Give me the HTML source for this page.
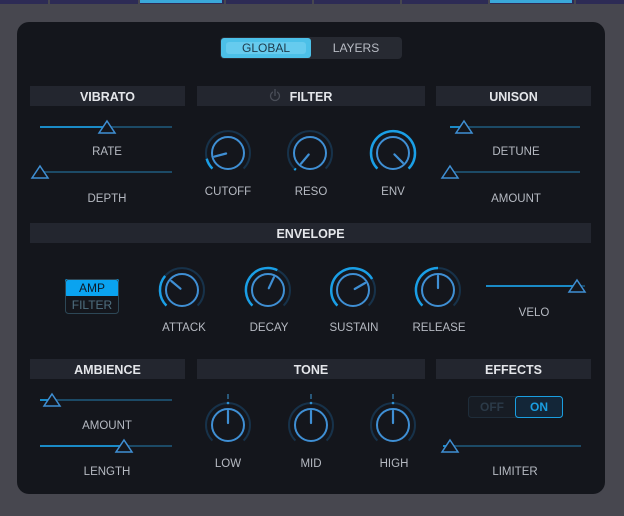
<!DOCTYPE html>
<html><head><meta charset="utf-8"><style>
body{margin:0;width:624px;height:516px;background:#47474f;overflow:hidden;font-family:"Liberation Sans",sans-serif}
</style></head><body>
<svg id="s" width="624" height="516" xmlns="http://www.w3.org/2000/svg" style="position:absolute;left:0;top:0;font-family:'Liberation Sans',sans-serif">
<rect x="0" y="0" width="624" height="4" fill="#2d2b55"/>
<rect x="140" y="0" width="82" height="3" fill="#3aa8da"/>
<rect x="490" y="0" width="82" height="3" fill="#3aa8da"/>
<g fill="#47474f"><rect x="48" y="0" width="2" height="4"/><rect x="138" y="0" width="2" height="4"/><rect x="224" y="0" width="2" height="4"/><rect x="312" y="0" width="2" height="4"/><rect x="400" y="0" width="2" height="4"/><rect x="488" y="0" width="2" height="4"/><rect x="574" y="0" width="2" height="4"/></g>
<rect x="17" y="22" width="588" height="472" rx="12" fill="#14161c"/>
<rect x="220" y="37" width="182" height="22" rx="4" fill="#272a32"/>
<rect x="221" y="38" width="90" height="20" rx="3" fill="#4cc0e8"/>
<rect x="226" y="42" width="80" height="12" rx="3" fill="#7fd6f4" opacity="0.5"/>
<text x="266" y="52" fill="#1e3a4a" font-size="12" text-anchor="middle">GLOBAL</text>
<text x="356" y="52" fill="#b8bcc4" font-size="12" text-anchor="middle">LAYERS</text>
<g id="hdr"></g>
<rect x="65" y="279" width="54" height="17" rx="2" fill="#0aa3f0"/>
<rect x="65.5" y="279.5" width="53" height="34" rx="3" fill="none" stroke="#2d4756"/>
<text x="92" y="292" fill="#0d1a28" font-size="12" text-anchor="middle">AMP</text>
<text x="92" y="309" fill="#4f6f80" font-size="12" text-anchor="middle">FILTER</text>
<rect x="468.5" y="396.5" width="94" height="21" rx="3" fill="#171c24" stroke="#1f2d3a"/>
<rect x="515.5" y="396.5" width="47" height="21" rx="3" fill="#132638" stroke="#1a9ee0"/>
<text x="492" y="411" fill="#2b3a48" font-size="12" font-weight="bold" text-anchor="middle">OFF</text>
<text x="539" y="411" fill="#1a9ee0" font-size="12" font-weight="bold" text-anchor="middle">ON</text>
</svg>
<script>
var h=document.getElementById('hdr'),o='';
function hd(x1,x2,y,t){o+='<rect x="'+x1+'" y="'+y+'" width="'+(x2-x1)+'" height="20" fill="#23262f"/><text x="'+((x1+x2)/2)+'" y="'+(y+15)+'" fill="#e4e6ea" font-size="12.5" font-weight="bold" text-anchor="middle">'+t+'</text>';}
hd(30,185,86,'VIBRATO');hd(197,425,86,'FILTER');hd(436,591,86,'UNISON');hd(30,591,223,'ENVELOPE');hd(30,185,359,'AMBIENCE');hd(197,425,359,'TONE');hd(436,591,359,'EFFECTS');
o+='<circle cx="275" cy="96" r="4.5" fill="none" stroke="#4a4e58" stroke-width="1.3"/><rect x="273" y="88" width="4" height="5" fill="#23262f"/><line x1="275" y1="89" x2="275" y2="96" stroke="#4a4e58" stroke-width="1.3"/>';
function lb(x,y,t){o+='<text x="'+x+'" y="'+y+'" fill="#b6bac2" font-size="11.5" text-anchor="middle">'+t+'</text>';}
function pt(cx,cy,r,a){a=a*Math.PI/180;return (cx+r*Math.sin(a)).toFixed(1)+' '+(cy-r*Math.cos(a)).toFixed(1);}
function arc(cx,cy,r,a1,a2,c,w){if(a2-a1<1)return;o+='<path d="M'+pt(cx,cy,r,a1)+' A'+r+' '+r+' 0 '+(a2-a1>180?1:0)+' 1 '+pt(cx,cy,r,a2)+'" fill="none" stroke="'+c+'" stroke-width="'+w+'"/>';}
function kn(cx,cy,v,from,tick){arc(cx,cy,22,-135,135,'#17324a',2);if(from==null)from=-135;arc(cx,cy,22,Math.min(from,v),Math.max(from,v),'#1a9fe6',2.5);
o+='<circle cx="'+cx+'" cy="'+cy+'" r="16" fill="#14161c" stroke="#3f8fd4" stroke-width="2"/><line x1="'+pt(cx,cy,2,v).replace(' ','" y1="')+'" x2="'+pt(cx,cy,14,v).replace(' ','" y2="')+'" stroke="#3f8fd4" stroke-width="2.2" stroke-linecap="round"/>';
if(tick)o+='<line x1="'+cx+'" y1="'+(cy-31)+'" x2="'+cx+'" y2="'+(cy-26)+'" stroke="#2f6d98" stroke-width="1.5"/><circle cx="'+cx+'" cy="'+(cy-22)+'" r="1.3" fill="#2f8fd0"/>';}
kn(228,153,-105);kn(310,153,-140,-135);kn(393,153,135);
kn(182,290,-50);kn(268,290,25);kn(353,290,60);kn(438,290,0);
kn(228,425,0,0,1);kn(311,425,0,0,1);kn(393,425,0,0,1);
function sl(x1,x2,y,t){o+='<line x1="'+x1+'" y1="'+y+'" x2="'+x2+'" y2="'+y+'" stroke="#1c4a66" stroke-width="2"/><line x1="'+x1+'" y1="'+y+'" x2="'+t+'" y2="'+y+'" stroke="#1aa0e6" stroke-width="1.5"/><path d="M'+t+' '+(y-6)+' L'+(t+8)+' '+(y+6)+' L'+(t-8)+' '+(y+6)+'Z" fill="#14161c" stroke="#3f8fd4" stroke-width="1.5"/>';}
sl(40,172,127,107);sl(40,172,172,40);sl(450,580,127,464);sl(450,580,172,450);sl(486,585,286,577);sl(40,172,400,52);sl(40,172,446,124);sl(443,581,446,450);
lb(107,155,'RATE');lb(107,202,'DEPTH');lb(516,155,'DETUNE');lb(516,202,'AMOUNT');lb(228,195,'CUTOFF');lb(311,195,'RESO');lb(393,195,'ENV');
lb(184,331,'ATTACK');lb(269,331,'DECAY');lb(354,331,'SUSTAIN');lb(439,331,'RELEASE');lb(534,316,'VELO');
lb(107,429,'AMOUNT');lb(107,475,'LENGTH');lb(228,467,'LOW');lb(311,467,'MID');lb(394,467,'HIGH');lb(515,475,'LIMITER');
h.innerHTML=o;
</script>
</body></html>
